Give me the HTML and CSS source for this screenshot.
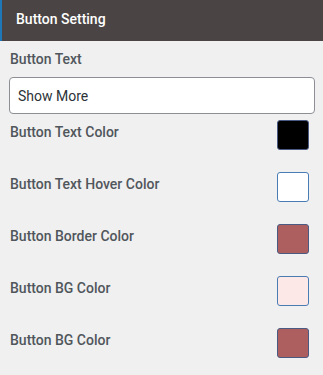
FILE: index.html
```html
<!DOCTYPE html>
<html lang="en">
<head>
    <meta charset="UTF-8">
    <meta name="viewport" content="width=device-width, initial-scale=1.0">
    <title>Button Setting</title>
    <link rel="stylesheet" href="styles.css">
</head>
<body>
    <div class="panel">
        <div class="panel-header">Button Setting</div>
        <div class="panel-body">
            <div class="field">
                <label class="field-label" for="btn-text">Button Text</label>
                <input class="text-input" id="btn-text" type="text" value="Show More">
            </div>
            <div class="color-row">
                <span class="field-label">Button Text Color</span>
                <span class="swatch swatch-dark" style="background-color: #000000;"></span>
            </div>
            <div class="color-row">
                <span class="field-label">Button Text Hover Color</span>
                <span class="swatch" style="background-color: #ffffff;"></span>
            </div>
            <div class="color-row">
                <span class="field-label">Button Border Color</span>
                <span class="swatch swatch-dark" style="background-color: #ad5e5e;"></span>
            </div>
            <div class="color-row">
                <span class="field-label">Button BG Color</span>
                <span class="swatch" style="background-color: #fde8e8;"></span>
            </div>
            <div class="color-row">
                <span class="field-label">Button BG Color</span>
                <span class="swatch swatch-dark" style="background-color: #ad5e5e;"></span>
            </div>
        </div>
    </div>
</body>
</html>
```

FILE: styles.css
```css
body {
    margin: 0;
    background-color: #f0f0f0;
    font-family: Roboto, "Liberation Sans", sans-serif;
}

.panel {
    width: 323px;
}

.panel-header {
    background-color: #4a4544;
    color: #fff;
    font-size: 14px;
    font-weight: 500;
    height: 41px;
    line-height: 39px;
    padding-left: 14px;
    border-left: 2px solid #1e78b8;
    box-sizing: border-box;
}

.panel-body {
    padding: 9px 8px 0 9px;
}

.field {
    display: flex;
    flex-direction: column;
}

.field-label {
    color: #50565c;
    font-size: 14px;
    font-weight: 500;
    line-height: 18px;
    margin-left: 1px;
}

.text-input {
    margin-top: 9px;
    height: 37px;
    box-sizing: border-box;
    border: 1px solid #8c8f94;
    border-radius: 4px;
    background-color: #fff;
    padding: 0 8px;
    font-family: Roboto, "Liberation Sans", sans-serif;
    font-size: 14px;
    color: #2c3338;
}

.color-row {
    display: flex;
    justify-content: space-between;
    align-items: flex-start;
    height: 52px;
    padding-top: 6px;
    box-sizing: border-box;
}

.color-row .field-label {
    margin-top: 3px;
}

.swatch {
    width: 32px;
    height: 30px;
    box-sizing: border-box;
    border: 1px solid #4a7cb4;
    border-radius: 3px;
    margin-right: 6px;
}

.swatch-dark {
    border-color: #4a5a82;
}
```
